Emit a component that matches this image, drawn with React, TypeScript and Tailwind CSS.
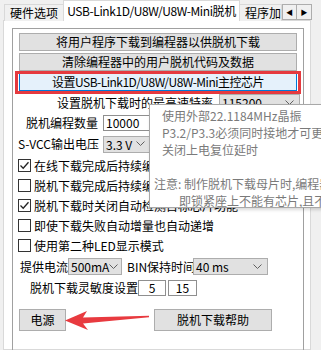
import React from "react";

const FONT = "font-['Noto_Sans_CJK_SC','Liberation_Sans',sans-serif]";

function Chevron() {
  return (
    <svg width="9" height="6" viewBox="0 0 9 6" className="shrink-0">
      <polyline points="0.5,0.5 4.5,4.5 8.5,0.5" fill="none" stroke="#606060" strokeWidth="1" />
    </svg>
  );
}

function Combo({ value, className }: { value: string; className: string }) {
  return (
    <div
      className={`flex items-center justify-between bg-[#e1e1e1] border border-[#adadad] pl-[2px] pr-[5px] h-[17px] ${className}`}
    >
      <span className="leading-[15px]">{value}</span>
      <Chevron />
    </div>
  );
}

function Edit({ value, className }: { value: string; className: string }) {
  return (
    <div className={`bg-white border border-[#8f8f8f] h-[16px] leading-[14px] ${className}`}>{value}</div>
  );
}

function Check({ checked, label }: { checked: boolean; label: string }) {
  return (
    <div className="flex items-center h-[20px] ml-[5px] whitespace-nowrap">
      <div className="w-[13px] h-[13px] border border-[#333333] bg-white flex items-center justify-center shrink-0">
        {checked && (
          <svg width="11" height="11" viewBox="0 0 11 11">
            <polyline points="1.5,5.5 4.2,8.2 9.5,2.2" fill="none" stroke="#222" strokeWidth="1.3" />
          </svg>
        )}
      </div>
      <span className="ml-[3px] text-[12px] leading-[17px]">{label}</span>
    </div>
  );
}

function WinButton({ children, className }: { children: React.ReactNode; className: string }) {
  return (
    <div
      className={`flex items-center justify-center bg-[#e1e1e1] border border-[#adadad] text-[12px] whitespace-nowrap ${className}`}
    >
      {children}
    </div>
  );
}

export default function App() {
  return (
    <div className={`relative w-[321px] h-[350px] bg-[#f0f0f0] overflow-hidden text-black text-[12px] ${FONT}`}>
      {/* tab strip */}
      <div className="relative z-10 flex items-end h-[21px] -mb-px">
        <div className="ml-[4px] w-[59px] h-[17px] bg-[#f0f0f0] border-t border-l border-[#d9d9d9] flex items-center justify-center leading-[16px]">
          硬件选项
        </div>
        <div className="w-[177px] h-[21px] bg-white border-t border-l border-r border-[#d9d9d9] flex items-center justify-center leading-[18px] whitespace-nowrap tracking-[-0.4px]">
          USB-Link1D/U8W/U8W-Mini脱机
        </div>
        <div className="w-[42px] h-[17px] bg-[#f0f0f0] border-t border-r border-[#d9d9d9] overflow-hidden whitespace-nowrap pl-[5px] leading-[16px]">
          程序加
        </div>
        <div className="self-start mt-[4px] flex">
          <div className="w-[15px] h-[16px] bg-[#f0f0f0] border border-[#adadad] flex items-center justify-center text-[7px] leading-none">
            ◀
          </div>
          <div className="w-[15px] h-[16px] bg-[#f0f0f0] border border-l-0 border-[#adadad] flex items-center justify-center text-[7px] leading-none">
            ▶
          </div>
        </div>
      </div>

      {/* tab page */}
      <div className="ml-[3px] w-[308px] h-[330px] bg-white border border-[#d9d9d9]">
        <div className="ml-[8px] mt-[7px] w-[292px] h-[340px] border border-[#a0a0a0] flex flex-col">
          <WinButton className="ml-[6px] mt-[4px] w-[278px] h-[18px]">将用户程序下载到编程器以供脱机下载</WinButton>
          <WinButton className="ml-[6px] mt-[2px] w-[278px] h-[18px]">清除编程器中的用户脱机代码及数据</WinButton>
          <div className="ml-[6px] mt-[2px] w-[278px] h-[18px] flex items-center justify-center bg-[#e5f1fb] border border-[#0078d7] whitespace-nowrap tracking-[-0.5px]">
            设置USB-Link1D/U8W/U8W-Mini主控芯片
          </div>

          <div className="flex items-center mt-[3px] h-[17px] whitespace-nowrap">
            <span className="ml-[44px] w-[162px]">设置脱机下载时的最高速特率</span>
            <Combo value="115200" className="w-[81px]" />
          </div>

          <div className="flex items-center mt-[3px] h-[17px] whitespace-nowrap">
            <span className="ml-[13px] w-[77px]">脱机编程数量</span>
            <Edit value="10000" className="w-[70px] pl-[2px]" />
          </div>

          <div className="flex items-center mt-[4px] h-[18px] whitespace-nowrap">
            <span className="ml-[5px] w-[85px]">S-VCC输出电压</span>
            <Combo value="3.3 V" className="w-[48px]" />
          </div>

          <div className="mt-[2px] flex flex-col">
            <Check checked label="在线下载完成后持续编程器供电" />
            <Check checked={false} label="脱机下载完成后持续编程器供电" />
            <Check checked label="脱机下载时关闭自动检测目标芯片功能" />
            <Check checked={false} label="即使下载失败自动增量也自动递增" />
            <Check checked={false} label="使用第二种LED显示模式" />
          </div>

          <div className="flex items-center mt-[3px] h-[17px] whitespace-nowrap">
            <span className="ml-[7px] w-[48px]">提供电流</span>
            <Combo value="500mA" className="w-[54px]" />
            <span className="ml-[5px] w-[66px]">BIN保持时间</span>
            <Combo value="40 ms" className="w-[75px]" />
          </div>

          <div className="flex items-center mt-[5px] h-[16px] whitespace-nowrap">
            <span className="ml-[17px] w-[108px]">脱机下载灵敏度设置</span>
            <Edit value="5" className="w-[28px] text-center" />
            <Edit value="15" className="ml-[2px] w-[29px] text-center" />
          </div>

          <div className="flex items-center mt-[13px]">
            <WinButton className="ml-[6px] w-[47px] h-[22px]">电源</WinButton>
            <WinButton className="ml-[88px] w-[118px] h-[22px]">脱机下载帮助</WinButton>
          </div>
        </div>
      </div>

      {/* red highlight around the focused button */}
      <div className="absolute left-[15px] top-[71px] w-[286px] h-[23px] border-[3px] border-[#e53a3f] z-20" />

      {/* red arrow pointing at 电源 */}
      <svg className="absolute left-0 top-0 z-20" width="321" height="350" viewBox="0 0 321 350">
        <polygon
          points="65,320.5 87,311 83,317.5 149,315.8 149,317.2 83,323.5 88,330"
          fill="#e83a3f"
        />
      </svg>

      {/* tooltip */}
      <div className="absolute left-[149px] top-[104px] w-[190px] h-[104px] bg-white border border-[#a8a8a8] shadow-[1px_2px_3px_rgba(0,0,0,0.15)] z-30 text-[#7a7a7a] text-[12px] leading-[17px] pt-[2px] whitespace-nowrap overflow-hidden">
        <div className="pl-[12px]">使用外部22.1184MHz晶振</div>
        <div className="pl-[12px]">P3.2/P3.3必须同时接地才可更改</div>
        <div className="pl-[12px]">关闭上电复位延时</div>
        <div>&nbsp;</div>
        <div className="pl-[4px]">注意: 制作脱机下载母片时,编程器</div>
        <div className="pl-[29px]">即锁紧座上不能有芯片,且不能</div>
      </div>
    </div>
  );
}
